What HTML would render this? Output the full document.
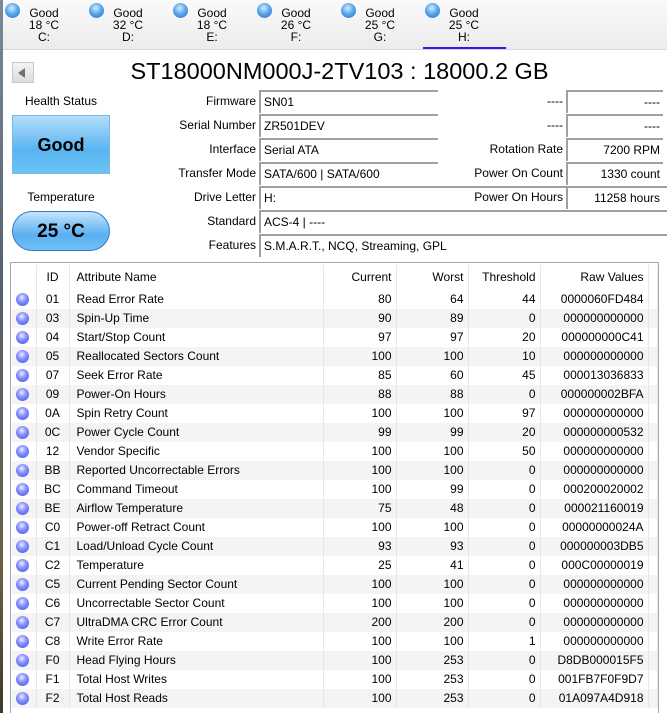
<!DOCTYPE html>
<html><head><meta charset="utf-8"><style>
*{margin:0;padding:0;box-sizing:border-box}
body{width:667px;height:713px;overflow:hidden;background:#fff;font-family:"Liberation Sans",sans-serif;font-size:12px;color:#000;position:relative}
.a{position:absolute}
.strip{left:0;top:0;width:3px;height:713px;background:linear-gradient(#7a8a9a,#556070 40%,#6a6040 80%,#403828)}
.tabs{left:3px;top:0;width:664px;height:50px;background:linear-gradient(#fafafa,#ececec);border-bottom:1px solid #d8d8d8}
.tab{position:absolute;top:7px;width:80px;text-align:center;line-height:12px;font-size:12px}
.dot{position:absolute;width:15px;height:15px;border-radius:50%;background:radial-gradient(circle at 45% 35%,#d8ecff 0,#5aa8ee 45%,#1c6cc8 100%)}
.lbl{position:absolute;text-align:right;width:150px}
.box{position:absolute;height:23px;border-top:2px solid #a0a0a0;border-left:2px solid #a0a0a0;background:#fff;padding:3px 3px;line-height:15px;white-space:nowrap}
.box.r{text-align:right}
table{border-collapse:collapse;position:absolute;left:12px;top:265px;width:645px;table-layout:fixed}
td{height:19px;padding:0 4px;line-height:19px;white-space:nowrap;border-right:1px solid #e8e8e8}
tr.h td{height:25px;line-height:25px}
tr:nth-child(odd):not(.h) td{background:#f4f4f4}
td.n{text-align:right}
td.c{text-align:center}
td.t{padding-left:7px}
.ic{width:13px;height:13px;border-radius:50%;display:inline-block;vertical-align:middle;background:radial-gradient(circle at 45% 35%,#eef 0,#8890ff 40%,#3a50e8 100%)}
</style></head><body>
<div class="a strip"></div>
<div class="a tabs">
<div class="dot" style="left:2px;top:3px"></div><div class="tab" style="left:1px">Good<br>18 °C<br>C:</div>
<div class="dot" style="left:86px;top:3px"></div><div class="tab" style="left:85px">Good<br>32 °C<br>D:</div>
<div class="dot" style="left:170px;top:3px"></div><div class="tab" style="left:169px">Good<br>18 °C<br>E:</div>
<div class="dot" style="left:254px;top:3px"></div><div class="tab" style="left:253px">Good<br>26 °C<br>F:</div>
<div class="dot" style="left:338px;top:3px"></div><div class="tab" style="left:337px">Good<br>25 °C<br>G:</div>
<div class="dot" style="left:422px;top:3px"></div><div class="tab" style="left:421px">Good<br>25 °C<br>H:</div>
<div class="a" style="left:420px;top:47px;width:83px;height:2px;background:#3a10f0"></div>
</div>
<div class="a" style="left:12px;top:62px;width:22px;height:21px;border:1px solid #c8c8c8;background:linear-gradient(#f4f4f4,#dcdcdc)"><div class="a" style="left:5px;top:5px;width:0;height:0;border-top:5px solid transparent;border-bottom:5px solid transparent;border-right:7px solid #707070"></div></div>
<div class="a" style="left:0;top:58px;width:667px;text-align:center;font-size:23.5px;padding-left:12px">ST18000NM000J-2TV103 : 18000.2 GB</div>
<div class="a" style="left:12px;top:94px;width:98px;text-align:center">Health Status</div>
<div class="a" style="left:12px;top:115px;width:98px;height:59px;border:1px solid #7ab8e8;background:linear-gradient(#b4dcfa,#58b4f0 60%,#6cc4f4);text-align:center;line-height:58px;font-size:18px;font-weight:bold">Good</div>
<div class="a" style="left:12px;top:190px;width:98px;text-align:center">Temperature</div>
<div class="a" style="left:12px;top:211px;width:98px;height:40px;border:1px solid #3a78c8;border-radius:20px;background:linear-gradient(#c4e4fc,#5ab0f0 60%,#70c0f4);text-align:center;line-height:40px;font-size:19px;font-weight:bold">25 °C</div>
<div class="lbl" style="left:106px;top:94px">Firmware</div>
<div class="lbl" style="left:106px;top:118px">Serial Number</div>
<div class="lbl" style="left:106px;top:142px">Interface</div>
<div class="lbl" style="left:106px;top:166px">Transfer Mode</div>
<div class="lbl" style="left:106px;top:190px">Drive Letter</div>
<div class="lbl" style="left:106px;top:214px">Standard</div>
<div class="lbl" style="left:106px;top:238px">Features</div>
<div class="box" style="left:259px;top:90px;width:179px">SN01</div>
<div class="box" style="left:259px;top:114px;width:179px">ZR501DEV</div>
<div class="box" style="left:259px;top:138px;width:179px">Serial ATA</div>
<div class="box" style="left:259px;top:162px;width:179px">SATA/600 | SATA/600</div>
<div class="box" style="left:259px;top:186px;width:408px">H:</div>
<div class="box" style="left:259px;top:210px;width:408px">ACS-4 | ----</div>
<div class="box" style="left:259px;top:234px;width:408px">S.M.A.R.T., NCQ, Streaming, GPL</div>
<div class="lbl" style="left:413px;top:94px">----</div>
<div class="lbl" style="left:413px;top:118px">----</div>
<div class="lbl" style="left:413px;top:142px">Rotation Rate</div>
<div class="lbl" style="left:413px;top:166px">Power On Count</div>
<div class="lbl" style="left:413px;top:190px">Power On Hours</div>
<div class="box r" style="left:566px;top:90px;width:97px">----</div>
<div class="box r" style="left:566px;top:114px;width:97px">----</div>
<div class="box r" style="left:566px;top:138px;width:97px">7200 RPM</div>
<div class="box r" style="left:566px;top:162px;width:97px">1330 count</div>
<div class="box r" style="left:566px;top:186px;width:97px">11258 hours</div>
<div class="a" style="left:10px;top:262px;width:649px;height:451px;border:1px solid #a8a8a8;border-bottom:none"></div>
<table>
<colgroup><col style="width:24px"><col style="width:33px"><col style="width:254px"><col style="width:73px"><col style="width:72px"><col style="width:72px"><col style="width:108px"><col style="width:9px"></colgroup>
<tr class="h"><td></td><td class="c">ID</td><td class="t">Attribute Name</td><td class="n">Current</td><td class="n">Worst</td><td class="n">Threshold</td><td class="n">Raw Values</td><td></td></tr>
<tr><td><span class="ic"></span></td><td class="c">01</td><td class="t">Read Error Rate</td><td class="n">80</td><td class="n">64</td><td class="n">44</td><td class="n">0000060FD484</td><td></td></tr>
<tr><td><span class="ic"></span></td><td class="c">03</td><td class="t">Spin-Up Time</td><td class="n">90</td><td class="n">89</td><td class="n">0</td><td class="n">000000000000</td><td></td></tr>
<tr><td><span class="ic"></span></td><td class="c">04</td><td class="t">Start/Stop Count</td><td class="n">97</td><td class="n">97</td><td class="n">20</td><td class="n">000000000C41</td><td></td></tr>
<tr><td><span class="ic"></span></td><td class="c">05</td><td class="t">Reallocated Sectors Count</td><td class="n">100</td><td class="n">100</td><td class="n">10</td><td class="n">000000000000</td><td></td></tr>
<tr><td><span class="ic"></span></td><td class="c">07</td><td class="t">Seek Error Rate</td><td class="n">85</td><td class="n">60</td><td class="n">45</td><td class="n">000013036833</td><td></td></tr>
<tr><td><span class="ic"></span></td><td class="c">09</td><td class="t">Power-On Hours</td><td class="n">88</td><td class="n">88</td><td class="n">0</td><td class="n">000000002BFA</td><td></td></tr>
<tr><td><span class="ic"></span></td><td class="c">0A</td><td class="t">Spin Retry Count</td><td class="n">100</td><td class="n">100</td><td class="n">97</td><td class="n">000000000000</td><td></td></tr>
<tr><td><span class="ic"></span></td><td class="c">0C</td><td class="t">Power Cycle Count</td><td class="n">99</td><td class="n">99</td><td class="n">20</td><td class="n">000000000532</td><td></td></tr>
<tr><td><span class="ic"></span></td><td class="c">12</td><td class="t">Vendor Specific</td><td class="n">100</td><td class="n">100</td><td class="n">50</td><td class="n">000000000000</td><td></td></tr>
<tr><td><span class="ic"></span></td><td class="c">BB</td><td class="t">Reported Uncorrectable Errors</td><td class="n">100</td><td class="n">100</td><td class="n">0</td><td class="n">000000000000</td><td></td></tr>
<tr><td><span class="ic"></span></td><td class="c">BC</td><td class="t">Command Timeout</td><td class="n">100</td><td class="n">99</td><td class="n">0</td><td class="n">000200020002</td><td></td></tr>
<tr><td><span class="ic"></span></td><td class="c">BE</td><td class="t">Airflow Temperature</td><td class="n">75</td><td class="n">48</td><td class="n">0</td><td class="n">000021160019</td><td></td></tr>
<tr><td><span class="ic"></span></td><td class="c">C0</td><td class="t">Power-off Retract Count</td><td class="n">100</td><td class="n">100</td><td class="n">0</td><td class="n">00000000024A</td><td></td></tr>
<tr><td><span class="ic"></span></td><td class="c">C1</td><td class="t">Load/Unload Cycle Count</td><td class="n">93</td><td class="n">93</td><td class="n">0</td><td class="n">000000003DB5</td><td></td></tr>
<tr><td><span class="ic"></span></td><td class="c">C2</td><td class="t">Temperature</td><td class="n">25</td><td class="n">41</td><td class="n">0</td><td class="n">000C00000019</td><td></td></tr>
<tr><td><span class="ic"></span></td><td class="c">C5</td><td class="t">Current Pending Sector Count</td><td class="n">100</td><td class="n">100</td><td class="n">0</td><td class="n">000000000000</td><td></td></tr>
<tr><td><span class="ic"></span></td><td class="c">C6</td><td class="t">Uncorrectable Sector Count</td><td class="n">100</td><td class="n">100</td><td class="n">0</td><td class="n">000000000000</td><td></td></tr>
<tr><td><span class="ic"></span></td><td class="c">C7</td><td class="t">UltraDMA CRC Error Count</td><td class="n">200</td><td class="n">200</td><td class="n">0</td><td class="n">000000000000</td><td></td></tr>
<tr><td><span class="ic"></span></td><td class="c">C8</td><td class="t">Write Error Rate</td><td class="n">100</td><td class="n">100</td><td class="n">1</td><td class="n">000000000000</td><td></td></tr>
<tr><td><span class="ic"></span></td><td class="c">F0</td><td class="t">Head Flying Hours</td><td class="n">100</td><td class="n">253</td><td class="n">0</td><td class="n">D8DB000015F5</td><td></td></tr>
<tr><td><span class="ic"></span></td><td class="c">F1</td><td class="t">Total Host Writes</td><td class="n">100</td><td class="n">253</td><td class="n">0</td><td class="n">001FB7F0F9D7</td><td></td></tr>
<tr><td><span class="ic"></span></td><td class="c">F2</td><td class="t">Total Host Reads</td><td class="n">100</td><td class="n">253</td><td class="n">0</td><td class="n">01A097A4D918</td><td></td></tr>
</table>
</body></html>
